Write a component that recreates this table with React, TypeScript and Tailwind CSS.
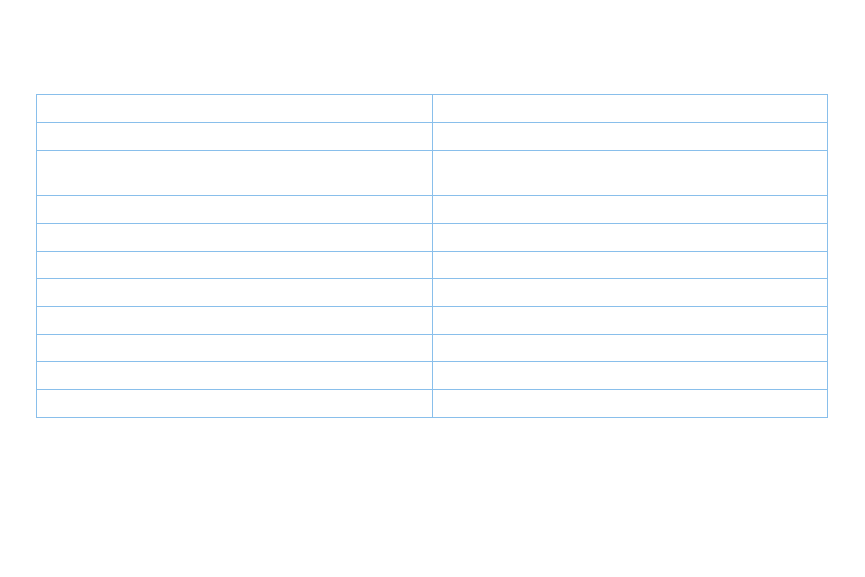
import React from "react";

const rows: string[] = [
  "h-[28px]",
  "h-[28px]",
  "h-[45px]",
  "h-[28px]",
  "h-[28px]",
  "h-[27px]",
  "h-[28px]",
  "h-[28px]",
  "h-[27px]",
  "h-[28px]",
  "h-[28px]",
];

export default function App() {
  return (
    <div className="min-h-[577px] w-[865px] bg-white pt-[94px] pl-[36px] font-['Liberation_Sans',sans-serif]">
      <div className="flex w-[792px] flex-col border-l border-t border-[#89bfeb]">
        {rows.map((h, i) => (
          <div key={i} className={`flex ${h}`}>
            <div className="box-border w-[396px] border-b border-r border-[#89bfeb]" />
            <div className="box-border w-[395px] border-b border-r border-[#89bfeb]" />
          </div>
        ))}
      </div>
    </div>
  );
}
